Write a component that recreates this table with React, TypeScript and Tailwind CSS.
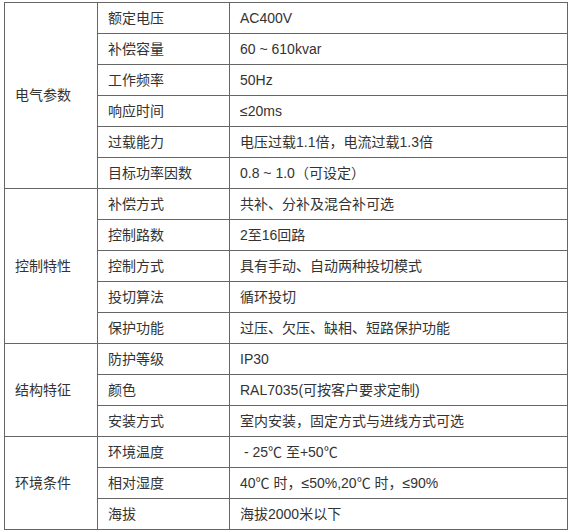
import React from 'react';

interface Group {
  name: string;
  rows: [string, string][];
}

const groups: Group[] = [
  {
    name: '电气参数',
    rows: [
      ['额定电压', 'AC400V'],
      ['补偿容量', '60 ~ 610kvar'],
      ['工作频率', '50Hz'],
      ['响应时间', '≤20ms'],
      ['过载能力', '电压过载1.1倍，电流过载1.3倍'],
      ['目标功率因数', '0.8 ~ 1.0（可设定）'],
    ],
  },
  {
    name: '控制特性',
    rows: [
      ['补偿方式', '共补、分补及混合补可选'],
      ['控制路数', '2至16回路'],
      ['控制方式', '具有手动、自动两种投切模式'],
      ['投切算法', '循环投切'],
      ['保护功能', '过压、欠压、缺相、短路保护功能'],
    ],
  },
  {
    name: '结构特征',
    rows: [
      ['防护等级', 'IP30'],
      ['颜色', 'RAL7035(可按客户要求定制)'],
      ['安装方式', '室内安装，固定方式与进线方式可选'],
    ],
  },
  {
    name: '环境条件',
    rows: [
      ['环境温度', ' - 25℃ 至+50℃'],
      ['相对湿度', '40℃ 时，≤50%,20℃ 时，≤90%'],
      ['海拔', '海拔2000米以下'],
    ],
  },
];

const cell = 'border border-[#666] px-[10px] h-[31px] align-middle whitespace-pre';

export default function App() {
  return (
    <div
      className="bg-white w-[572px] h-[531px] pl-[4px] pt-[2px] text-[14px] text-[#333]"
      style={{ fontFamily: '"Liberation Sans", "Noto Sans CJK SC", sans-serif' }}
    >
      <table className="table-fixed border-collapse w-[564px]">
        <colgroup>
          <col className="w-[93px]" />
          <col className="w-[132px]" />
          <col />
        </colgroup>
        <tbody>
          {groups.map((g) =>
            g.rows.map(([k, v], i) => (
              <tr key={g.name + k}>
                {i === 0 && (
                  <td rowSpan={g.rows.length} className={cell}>
                    {g.name}
                  </td>
                )}
                <td className={cell}>{k}</td>
                <td className={cell}>{v}</td>
              </tr>
            ))
          )}
        </tbody>
      </table>
    </div>
  );
}
